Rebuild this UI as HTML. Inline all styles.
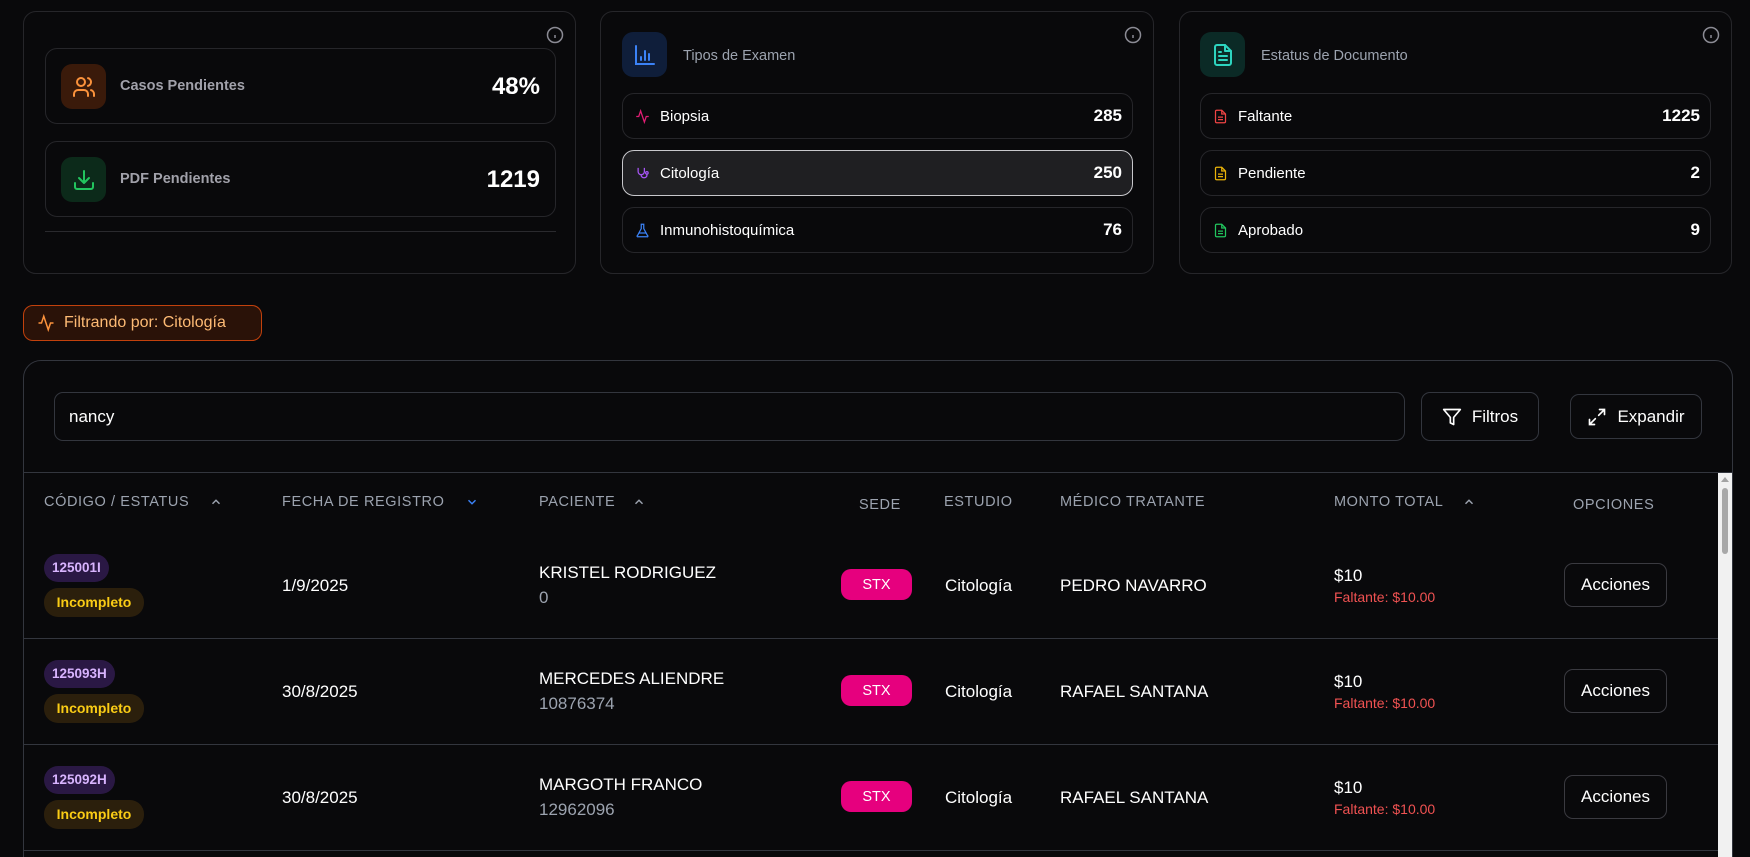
<!DOCTYPE html>
<html><head><meta charset="utf-8"><style>
*{box-sizing:border-box;margin:0;padding:0}
html,body{width:1750px;height:857px;overflow:hidden;background:#09090b}
body{font-family:"Liberation Sans",Arial,sans-serif;color:#fff}
#w{position:relative;width:1750px;height:857px;overflow:hidden;background:#09090b}
.a{position:absolute}
.card{position:absolute;border:1px solid #26262a;border-radius:13px;background:#09090b}
.in{position:absolute;border:1px solid #26262a;border-radius:12px;background:#09090b}
.info{position:absolute;width:18px;height:18px}
.ibox{position:absolute;width:45px;height:45px;border-radius:11px;display:flex;align-items:center;justify-content:center}
.row{position:absolute;left:21px;width:511px;height:46px;border:1px solid #26262a;border-radius:12px;display:flex;align-items:center;padding:0 10px 0 12px;font-size:15px}
.row svg{margin-right:10px}
.row b{margin-left:auto;font-size:17px}
.hd{position:absolute;top:494px;font-size:14.5px;color:#9ca3af;letter-spacing:.6px}
.sep{position:absolute;left:24px;width:1694px;height:1px;background:#33363e}
.code{position:absolute;left:44px;height:28px;padding:0 8px;border-radius:14px;background:#2a1844;color:#d8b4fe;font-weight:bold;font-size:13.5px;line-height:28px}
.inc{position:absolute;left:44px;height:29px;width:100px;border-radius:14px;background:#2b1f0c;color:#facc15;font-weight:bold;font-size:14px;line-height:29px;text-align:center}
.t{position:absolute;font-size:17px}
.g{position:absolute;font-size:17px;color:#9ca3af}
.stx{position:absolute;left:841px;width:71px;height:31px;border-radius:10px;background:#e6007e;font-size:14.5px;line-height:33px;text-align:center}
.fal{position:absolute;left:1334px;font-size:14px;color:#f05252}
.acc{position:absolute;left:1564px;width:103px;height:44px;border:1px solid #3a3a40;border-radius:9px;font-size:17px;line-height:42px;text-align:center}
</style></head><body><div id="w">

<div class="card" style="left:23px;top:11px;width:553px;height:263px">
 <svg class="info" style="left:522px;top:14px" viewBox="0 0 24 24" fill="none" stroke="#8b8b94" stroke-width="2"><circle cx="12" cy="12" r="10"/><path d="M12 16v-4M12 8h.01"/></svg>
 <div class="in" style="left:21px;top:36px;width:511px;height:76px">
  <div class="ibox" style="left:15px;top:15px;background:#3a1a0a"><svg width="24" height="24" viewBox="0 0 24 24" fill="none" stroke="#fb923c" stroke-width="2" stroke-linecap="round"><path d="M16 21v-2a4 4 0 0 0-4-4H6a4 4 0 0 0-4 4v2"/><circle cx="9" cy="7" r="4"/><path d="M22 21v-2a4 4 0 0 0-3-3.87M16 3.13a4 4 0 0 1 0 7.75"/></svg></div>
  <div class="a" style="left:74px;top:29px;font-size:14.5px;font-weight:bold;color:#a1a1aa">Casos Pendientes</div>
  <div class="a" style="right:15px;top:24px;font-size:24px;font-weight:bold">48%</div>
 </div>
 <div class="in" style="left:21px;top:129px;width:511px;height:76px">
  <div class="ibox" style="left:15px;top:15px;background:#0c2a1a"><svg width="24" height="24" viewBox="0 0 24 24" fill="none" stroke="#22c55e" stroke-width="2" stroke-linecap="round" stroke-linejoin="round"><path d="M21 15v4a2 2 0 0 1-2 2H5a2 2 0 0 1-2-2v-4"/><path d="M7 10l5 5 5-5M12 15V3"/></svg></div>
  <div class="a" style="left:74px;top:29px;font-size:14.5px;font-weight:bold;color:#a1a1aa">PDF Pendientes</div>
  <div class="a" style="right:15px;top:24px;font-size:24px;font-weight:bold">1219</div>
 </div>
 <div class="a" style="left:21px;top:219px;width:511px;height:1px;background:#2a2a2e"></div>
</div>

<div class="card" style="left:600px;top:11px;width:554px;height:263px">
 <svg class="info" style="left:523px;top:14px" viewBox="0 0 24 24" fill="none" stroke="#8b8b94" stroke-width="2"><circle cx="12" cy="12" r="10"/><path d="M12 16v-4M12 8h.01"/></svg>
 <div class="ibox" style="left:21px;top:20px;background:#0f1e3a"><svg width="24" height="24" viewBox="0 0 24 24" fill="none" stroke="#3b82f6" stroke-width="2" stroke-linecap="round"><path d="M3 3v18h18"/><path d="M8 17v-3M12 17V8M16 17v-6"/></svg></div>
 <div class="a" style="left:82px;top:36px;font-size:14.5px;color:#9ca3af">Tipos de Examen</div>
 <div class="row" style="top:81px"><svg width="15" height="15" viewBox="0 0 24 24" fill="none" stroke="#e11d74" stroke-width="2"><path d="M22 12h-4l-3 9L9 3l-3 9H2"/></svg>Biopsia<b>285</b></div>
 <div class="row" style="top:138px;background:#1f1f22;border-color:#c8c8cc"><svg width="15" height="15" viewBox="0 0 24 24" fill="none" stroke="#a855f7" stroke-width="2"><path d="M5 3v6a5 5 0 0 0 10 0V3"/><path d="M10 14v2a5 5 0 0 0 9 0v-3"/><circle cx="19" cy="11" r="2"/></svg>Citología<b>250</b></div>
 <div class="row" style="top:195px"><svg width="15" height="15" viewBox="0 0 24 24" fill="none" stroke="#3b82f6" stroke-width="2"><path d="M9 2h6M10 2v7L4 20a1 1 0 0 0 1 2h14a1 1 0 0 0 1-2L14 9V2M6 16h12"/></svg>Inmunohistoquímica<b>76</b></div>
</div>

<div class="card" style="left:1179px;top:11px;width:553px;height:263px">
 <svg class="info" style="left:522px;top:14px" viewBox="0 0 24 24" fill="none" stroke="#8b8b94" stroke-width="2"><circle cx="12" cy="12" r="10"/><path d="M12 16v-4M12 8h.01"/></svg>
 <div class="ibox" style="left:20px;top:20px;background:#0b2a26"><svg width="24" height="24" viewBox="0 0 24 24" fill="none" stroke="#2dd4bf" stroke-width="2" stroke-linecap="round" stroke-linejoin="round"><path d="M14 2H6a2 2 0 0 0-2 2v16a2 2 0 0 0 2 2h12a2 2 0 0 0 2-2V8z"/><path d="M14 2v6h6M16 13H8M16 17H8M10 9H8"/></svg></div>
 <div class="a" style="left:81px;top:36px;font-size:14.5px;color:#9ca3af">Estatus de Documento</div>
 <div class="row" style="top:81px;left:20px"><svg width="15" height="15" viewBox="0 0 24 24" fill="none" stroke="#ef4444" stroke-width="2"><path d="M14 2H6a2 2 0 0 0-2 2v16a2 2 0 0 0 2 2h12a2 2 0 0 0 2-2V8z"/><path d="M14 2v6h6M16 13H8M16 17H8"/></svg>Faltante<b>1225</b></div>
 <div class="row" style="top:138px;left:20px"><svg width="15" height="15" viewBox="0 0 24 24" fill="none" stroke="#eab308" stroke-width="2"><path d="M14 2H6a2 2 0 0 0-2 2v16a2 2 0 0 0 2 2h12a2 2 0 0 0 2-2V8z"/><path d="M14 2v6h6M16 13H8M16 17H8"/></svg>Pendiente<b>2</b></div>
 <div class="row" style="top:195px;left:20px"><svg width="15" height="15" viewBox="0 0 24 24" fill="none" stroke="#22c55e" stroke-width="2"><path d="M14 2H6a2 2 0 0 0-2 2v16a2 2 0 0 0 2 2h12a2 2 0 0 0 2-2V8z"/><path d="M14 2v6h6M16 13H8M16 17H8"/></svg>Aprobado<b>9</b></div>
</div>

<div class="a" style="left:23px;top:305px;width:239px;height:36px;border:1px solid #c2410c;border-radius:10px;background:#2a1208;display:flex;align-items:center;padding-left:13px;font-size:16px;color:#fdba74">
<svg width="18" height="18" viewBox="0 0 24 24" fill="none" stroke="#fb923c" stroke-width="2" style="margin-right:9px"><path d="M22 12h-4l-3 9L9 3l-3 9H2"/></svg>Filtrando por: Citología</div>

<div class="a" style="left:23px;top:360px;width:1710px;height:600px;border:1px solid #33363e;border-radius:18px;background:#09090b"></div>
<div class="a" style="left:54px;top:392px;width:1351px;height:49px;border:1px solid #33363e;border-radius:9px;font-size:17px;line-height:47px;padding-left:14px">nancy</div>
<div class="a" style="left:1421px;top:392px;width:118px;height:49px;border:1px solid #33363e;border-radius:9px;font-size:17px;display:flex;align-items:center;justify-content:center"><svg width="20" height="20" viewBox="0 0 24 24" fill="none" stroke="#fff" stroke-width="2" stroke-linejoin="round" style="margin-right:10px"><path d="M22 3H2l8 9.46V19l4 2v-8.54z"/></svg>Filtros</div>
<div class="a" style="left:1570px;top:394px;width:132px;height:45px;border:1px solid #33363e;border-radius:9px;font-size:17px;display:flex;align-items:center;justify-content:center"><svg width="20" height="20" viewBox="0 0 24 24" fill="none" stroke="#fff" stroke-width="2" stroke-linecap="round" style="margin-right:10px"><path d="M15 3h6v6M21 3l-7 7M9 21H3v-6M3 21l7-7"/></svg>Expandir</div>
<div class="a" style="left:24px;top:472px;width:1708px;height:1px;background:#33363e"></div>
<div class="a" style="left:1718px;top:473px;width:14px;height:384px;background:#f1f1f1"></div>
<div class="a" style="left:1722px;top:488px;width:6px;height:66px;border-radius:3px;background:#a8a8a8"></div>
<div class="a" style="left:1721px;top:477px;width:0;height:0;border-left:4px solid transparent;border-right:4px solid transparent;border-bottom:5px solid #a3a3a3"></div>

<div class="hd" style="left:44px">CÓDIGO / ESTATUS</div>
<svg class="a" style="left:209px;top:495px" width="14" height="14" viewBox="0 0 24 24" fill="none" stroke="#9ca3af" stroke-width="2.5"><path d="M6 15l6-6 6 6"/></svg>
<div class="hd" style="left:282px">FECHA DE REGISTRO</div>
<svg class="a" style="left:465px;top:495px" width="14" height="14" viewBox="0 0 24 24" fill="none" stroke="#3b82f6" stroke-width="2.5"><path d="M6 9l6 6 6-6"/></svg>
<div class="hd" style="left:539px">PACIENTE</div>
<svg class="a" style="left:632px;top:495px" width="14" height="14" viewBox="0 0 24 24" fill="none" stroke="#9ca3af" stroke-width="2.5"><path d="M6 15l6-6 6 6"/></svg>
<div class="hd" style="left:859px;top:497px">SEDE</div>
<div class="hd" style="left:944px">ESTUDIO</div>
<div class="hd" style="left:1060px">MÉDICO TRATANTE</div>
<div class="hd" style="left:1334px">MONTO TOTAL</div>
<svg class="a" style="left:1462px;top:495px" width="14" height="14" viewBox="0 0 24 24" fill="none" stroke="#9ca3af" stroke-width="2.5"><path d="M6 15l6-6 6 6"/></svg>
<div class="hd" style="left:1573px;top:497px">OPCIONES</div>

<div class="code" style="top:554px">125001I</div>
<div class="inc" style="top:588px">Incompleto</div>
<div class="t" style="left:282px;top:576px">1/9/2025</div>
<div class="t" style="left:539px;top:563px">KRISTEL RODRIGUEZ</div>
<div class="g" style="left:539px;top:588px">0</div>
<div class="stx" style="top:569px">STX</div>
<div class="t" style="left:945px;top:576px">Citología</div>
<div class="t" style="left:1060px;top:576px">PEDRO NAVARRO</div>
<div class="t" style="left:1334px;top:566px">$10</div>
<div class="fal" style="top:589px">Faltante: $10.00</div>
<div class="acc" style="top:563px">Acciones</div>
<div class="sep" style="top:638px"></div>

<div class="code" style="top:660px">125093H</div>
<div class="inc" style="top:694px">Incompleto</div>
<div class="t" style="left:282px;top:682px">30/8/2025</div>
<div class="t" style="left:539px;top:669px">MERCEDES ALIENDRE</div>
<div class="g" style="left:539px;top:694px">10876374</div>
<div class="stx" style="top:675px">STX</div>
<div class="t" style="left:945px;top:682px">Citología</div>
<div class="t" style="left:1060px;top:682px">RAFAEL SANTANA</div>
<div class="t" style="left:1334px;top:672px">$10</div>
<div class="fal" style="top:695px">Faltante: $10.00</div>
<div class="acc" style="top:669px">Acciones</div>
<div class="sep" style="top:744px"></div>

<div class="code" style="top:766px">125092H</div>
<div class="inc" style="top:800px">Incompleto</div>
<div class="t" style="left:282px;top:788px">30/8/2025</div>
<div class="t" style="left:539px;top:775px">MARGOTH FRANCO</div>
<div class="g" style="left:539px;top:800px">12962096</div>
<div class="stx" style="top:781px">STX</div>
<div class="t" style="left:945px;top:788px">Citología</div>
<div class="t" style="left:1060px;top:788px">RAFAEL SANTANA</div>
<div class="t" style="left:1334px;top:778px">$10</div>
<div class="fal" style="top:801px">Faltante: $10.00</div>
<div class="acc" style="top:775px">Acciones</div>
<div class="sep" style="top:850px"></div>
</div></body></html>
